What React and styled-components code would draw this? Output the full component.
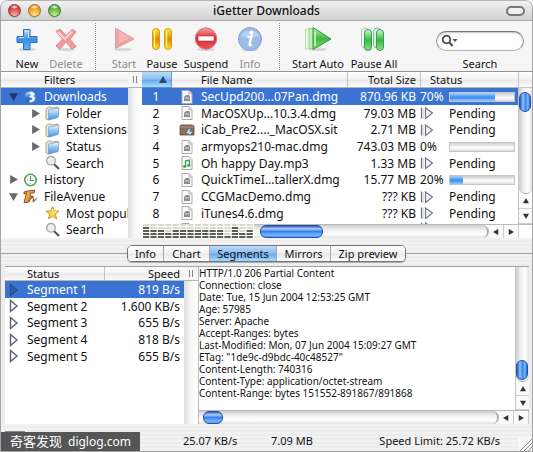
import React from "react";
import styled, { createGlobalStyle, css } from "styled-components";

const GlobalStyle = createGlobalStyle`
  * { box-sizing: border-box; }
  html, body { margin: 0; padding: 0; background: #fff; }
  body, button, input, table {
    font-family: "Noto Sans", "Open Sans", "Noto Sans CJK SC", sans-serif;
    font-size: 12px;
    color: #111;
  }
  button { border: 0; background: none; padding: 0; margin: 0; }
`;

const stripes = "repeating-linear-gradient(180deg, #f2f2f2 0 2px, #ededed 2px 4px)";
const headerFill = "linear-gradient(180deg, #fff 0%, #f3f3f3 45%, #e9e9e9 55%, #fcfcfc 100%)";
const blueFill = "linear-gradient(180deg, #b9dbf8 0%, #8fc0f2 45%, #6cabee 55%, #a5dcff 100%)";
const selected = "#3b73d3";

/* ---------- window ---------- */

const Window = styled.main`
  display: flex;
  flex-direction: column;
  min-height: 100vh;
  position: relative;
  overflow: hidden;
  background: #ededed;
  border: 1px solid #a4a4a4;
  border-top-color: #b4b4b4;
  border-radius: 8px 8px 0 0;
`;

const TitleBar = styled.header`
  display: grid;
  grid-template-columns: 68px 1fr 68px;
  align-items: center;
  height: 20px;
  padding: 0 7px;
  background: linear-gradient(180deg, #f1f1f1, #d2d2d2);
  border-bottom: 1px solid #a9a9a9;
`;

const Title = styled.h1`
  margin: 0;
  text-align: center;
  font-size: 12px;
  line-height: 18px;
  font-weight: 500;
`;

const Lights = styled.div`
  display: flex;
  gap: 7px;
`;

const Light = styled.button`
  width: 13px;
  height: 13px;
  border-radius: 50%;
  border: 1px solid ${(p) => p.$edge};
  background: radial-gradient(ellipse 4px 2px at 50% 18%, #fff, transparent),
    radial-gradient(circle at 50% 95%, ${(p) => p.$glow} 0, ${(p) => p.$base} 70%);
  box-shadow: 0 1px 1px #bbb;
`;

const Pill = styled.button`
  justify-self: end;
  width: 19px;
  height: 10px;
  border: 2px solid #777;
  border-radius: 5px;
  background: #f1f1f1;
`;

/* ---------- toolbar ---------- */

const Toolbar = styled.nav`
  display: flex;
  height: 51px;
  padding: 0 8px 0 7px;
  background: #f6f6f6;
  border-bottom: 1px solid #949494;
`;

const Tool = styled.button`
  width: ${(p) => p.$w}px;
  display: flex;
  flex-direction: column;
  align-items: center;
  padding-top: 4px;
  white-space: nowrap;
  font-size: 11px;
  line-height: 14px;
  color: #111;
  &:disabled { color: #8d8d8d; }
  svg { display: block; margin-bottom: 4px; flex: none; }
`;

const ToolDivider = styled.span`
  width: ${(p) => p.$w}px;
  display: flex;
  justify-content: center;
  &::after {
    content: "";
    margin: 2px 0 1px;
    border-left: 1px dotted #8c8c8c;
  }
`;

const SearchBox = styled.label`
  width: 88px;
  margin-left: auto;
  display: flex;
  flex-direction: column;
  align-items: center;
  padding-top: 10px;
  font-size: 11px;
  line-height: 14px;
`;

const SearchField = styled.span`
  width: 100%;
  height: 20px;
  margin-bottom: 6px;
  padding: 0 7px 0 4px;
  display: flex;
  align-items: center;
  background: #fff;
  border: 1px solid #8b8b8b;
  border-color: #777 #999 #b5b5b5;
  border-radius: 10px;
  box-shadow: inset 0 1px 2px #c0c0c0;
  input {
    flex: 1;
    min-width: 0;
    border: 0;
    outline: 0;
    padding: 0;
    background: transparent;
    font-size: 11px;
  }
`;

/* ---------- shared panes ---------- */

const Panes = styled.section`
  display: flex;
  flex: none;
  height: ${(p) => p.$h}px;
`;

const Splitter = styled.div`
  width: 14px;
  flex: none;
  background: linear-gradient(90deg, #dedede, #f7f7f7 50%, #fff);
  display: flex;
  flex-direction: column;
  align-items: stretch;
`;

const Grip = styled.span`
  height: ${(p) => p.$h}px;
  display: flex;
  justify-content: center;
  align-items: center;
  gap: 2px;
  background: #f6f6f6;
  border-bottom: 1px solid #b5b5b5;
  &::before, &::after {
    content: "";
    width: 1px;
    height: 7px;
    background: #858585;
  }
`;

const rowRhythm = css`
  height: 17px;
  &:nth-child(3n + 2) { height: 16px; }
`;

/* ---------- filters ---------- */

const FilterPane = styled.aside`
  width: 127px;
  flex: none;
  overflow: hidden;
  background: #fff;
`;

const FilterHeader = styled.h2`
  margin: 0;
  height: 16px;
  line-height: 15px;
  padding-left: 43px;
  font-size: 11px;
  font-weight: 400;
  background: ${headerFill};
  border-bottom: 1px solid #b5b5b5;
`;

const Tree = styled.ul`
  list-style: none;
  margin: 0;
  padding: 0;
`;

const TreeItem = styled.li`
  ${rowRhythm}
  display: flex;
  align-items: center;
  padding-left: ${(p) => (p.$nested ? 30 : 8)}px;
  white-space: nowrap;
  color: ${(p) => (p.$active ? "#fff" : "#111")};
  background: ${(p) => (p.$active ? selected : "transparent")};
`;

const Twisty = styled.button`
  width: 14px;
  height: 16px;
  flex: none;
  display: flex;
  align-items: center;
`;

const TreeIcon = styled.span`
  width: 21px;
  flex: none;
  height: 16px;
`;

/* ---------- tables ---------- */

const ListPane = styled.div`
  flex: 1;
  min-width: 0;
  display: flex;
  flex-direction: column;
  background: #fff;
`;

const ListBody = styled.div`
  flex: 1;
  min-height: 0;
  display: flex;
`;

const Clip = styled.div`
  flex: 1;
  min-width: 0;
  overflow: hidden;
`;

const Table = styled.table`
  width: 100%;
  table-layout: fixed;
  border-collapse: separate;
  border-spacing: 0;
  th {
    height: ${(p) => p.$head}px;
    padding: 0;
    font-size: 11px;
    line-height: 13px;
    font-weight: 400;
    text-align: left;
    white-space: nowrap;
    background: ${headerFill};
    border-bottom: 1px solid #b5b5b5;
  }
  td {
    padding: 0;
    line-height: 15px;
    white-space: nowrap;
    overflow: hidden;
  }
`;

const HeadCell = styled.th`
  && {
    padding-left: ${(p) => p.$pad || 0}px;
    text-align: ${(p) => (p.$right ? "right" : "left")};
    padding-right: ${(p) => (p.$right ? 4 : 0)}px;
    border-left: ${(p) => (p.$line ? "1px solid #c2c2c2" : "0")};
  }
  &&[aria-sort] {
    background: ${blueFill};
    border-right: 1px solid #6d9bd0;
    border-bottom-color: #5f8fc8;
  }
  svg { display: block; margin-left: 17px; }
`;

const Row = styled.tr`
  ${rowRhythm}
  color: ${(p) => (p.$active ? "#fff" : "#111")};
  background: ${(p) => (p.$active ? selected : "transparent")};
`;

const NumCell = styled.td`
  text-align: center;
  && { padding-right: 2px; }
`;

const SizeCell = styled.td`
  text-align: right;
  && { padding-right: 4px; }
`;

const IconCell = styled.td`
  svg { display: block; margin: 0 auto; }
`;

const StateCell = styled.td`
  && { padding-left: 3px; }
  svg { display: block; }
`;

const StatusLine = styled.div`
  display: grid;
  grid-template-columns: 29px 1fr;
  align-items: center;
  padding-right: 3px;
  height: 15px;
  svg { display: block; }
`;

const Track = styled.span`
  height: 10px;
  display: block;
  border: 1px solid #c6c6c6;
  background: linear-gradient(180deg, #cdcdcd, #fff 60%, #dcdcdc);
`;

const Fill = styled.span`
  display: block;
  height: 100%;
  background: linear-gradient(180deg, #a9d0fb, #3d8df0 55%, #87c8ff);
`;

/* ---------- scroll bars ---------- */

const VBar = styled.div`
  width: 14px;
  flex: none;
  display: flex;
  flex-direction: column;
  background: #fafafa;
  border-left: 1px solid #c4c4c4;
`;

const HBar = styled.div`
  height: 14px;
  flex: 1;
  min-width: 0;
  display: flex;
  background: #fafafa;
  border-top: 1px solid #b9b9b9;
`;

const Corner = styled.span`
  height: 16px;
  flex: none;
  background: ${headerFill};
  border-bottom: 1px solid #c2c2c2;
`;

const BarEnd = styled.span`
  width: 13px;
  flex: none;
  background: #fff;
`;

const VTrack = styled.div`
  flex: 1;
  display: flex;
  flex-direction: column;
  justify-content: ${(p) => (p.$end ? "flex-end" : "flex-start")};
  padding: 4px 0 ${(p) => (p.$end ? 1 : 0)}px;
  border-radius: 0 0 7px 7px;
  border-bottom: 1px solid #a5a5a5;
  background: linear-gradient(90deg, #cfcfcf, #f3f3f3 40%, #fff 70%, #e2e2e2);
`;

const HTrack = styled.div`
  flex: 1;
  display: flex;
  padding-left: ${(p) => p.$inset}px;
  border-radius: 0 7px 7px 0;
  border-right: 2px solid #aaa;
  background: linear-gradient(180deg, #cfcfcf, #f3f3f3 40%, #fff 70%, #e2e2e2);
`;

const VThumb = styled.span`
  height: 20px;
  width: 12px;
  border-radius: 6px;
  border: 1px solid #2a4fa0;
  background: linear-gradient(90deg, #1f55bd, #8fc3ff 30%, #3f86ea 55%, #74b9ff 80%, #2b62c4);
`;

const HThumb = styled.span`
  width: ${(p) => p.$w}px;
  height: 100%;
  border-radius: 6px;
  border: 1px solid #2a4fa0;
  background: linear-gradient(180deg, #2a5cc0, #a9d0ff 25%, #3b80e8 50%, #6cb6ff 80%, #5a9cf0);
`;

const Arrow = styled.button`
  width: ${(p) => p.$w}px;
  height: ${(p) => p.$h}px;
  flex: none;
  display: flex;
  align-items: center;
  justify-content: center;
  border: 0 solid #cdcdcd;
  border-width: ${(p) => (p.$vertical ? "0 0 1px" : "0 1px 0 0")};
`;

const Footer = styled.div`
  display: flex;
  height: 14px;
`;

/* ---------- tabs ---------- */

const TabRow = styled.div`
  display: flex;
  align-items: center;
  height: 28px;
  background: ${stripes};
  padding-top: 3px;
  &::before { content: ""; width: 126px; border-top: 1px solid #a0a0a0; }
  &::after { content: ""; flex: 1; border-top: 1px solid #a0a0a0; }
`;

const Tabs = styled.div`
  display: flex;
  height: 17px;
  border: 1px solid #747474;
  border-radius: 5px;
  overflow: hidden;
  box-shadow: 0 1px 1px #aaa;
`;

const Tab = styled.button`
  width: ${(p) => p.$w}px;
  font-size: 11px;
  line-height: 14px;
  background: ${headerFill};
  & + & { border-left: 1px solid #a8a8a8; }
  &[aria-selected="true"] { background: ${blueFill}; }
`;

/* ---------- details ---------- */

const Details = styled(Panes)`
  margin: 0 3px 0 4px;
  border-top: 1px solid #a3a3a3;
  background: #fff;
`;

const SegmentPane = styled.div`
  width: 179px;
  flex: none;
  background: #fff;
`;

const LogPane = styled.div`
  flex: 1;
  min-width: 0;
  display: flex;
  flex-direction: column;
  border-left: 1px solid #b9b9b9;
`;

const Log = styled.pre`
  flex: 1;
  min-width: 0;
  margin: 0;
  overflow: hidden;
  font-family: "Noto Sans", "Open Sans", sans-serif;
  font-size: 10px;
  line-height: 12px;
`;

/* ---------- status bar ---------- */

const StatusBar = styled.footer`
  flex: 1;
  display: flex;
  align-items: center;
  padding: 5px 3px 0 4px;
  font-size: 11px;
  background: ${stripes};
`;

const StatusButton = styled.button`
  width: 20px;
  height: 18px;
  margin-right: 158px;
  border: 1px solid #8a8a8a;
  background: #ddd;
`;

const Rate = styled.span`
  width: 88px;
`;

const Limit = styled.span`
  margin-left: auto;
  margin-right: 29px;
`;

const Resize = styled.span`
  position: absolute;
  right: 0;
  bottom: 0;
  line-height: 0;
`;

const Watermark = styled.div`
  position: absolute;
  left: 0;
  bottom: 0;
  width: 139px;
  height: 19px;
  padding-left: 9px;
  display: flex;
  gap: 6px;
  color: #fff;
  background: #555;
  font-size: 13px;
  line-height: 19px;
  white-space: nowrap;
`;

const Domain = styled.span`
  font-size: 12px;
`;

/* ---------- drawings ---------- */

const Svg = ({ w = 16, h = 16, vb, children }) => (
  <svg width={w} height={h} viewBox={vb || `0 0 ${w} ${h}`} fill="none" aria-hidden="true">
    {children}
  </svg>
);

const Grad = ({ id, from, mid, to }) => (
  <linearGradient id={id} x1="0" y1="0" x2="0" y2="1">
    <stop offset="0" stopColor={from} />
    <stop offset="0.5" stopColor={mid} />
    <stop offset="1" stopColor={to} />
  </linearGradient>
);

const Shadow = ({ cx = 14 }) => <ellipse cx={cx} cy="24.5" rx="9" ry="1.6" fill="#000" opacity=".13" />;

const toolIcons = {
  new: (
    <Svg w={28} h={28}>
      <defs><Grad id="plus" from="#b9dcf8" mid="#3c8fe2" to="#5fb4f5" /></defs>
      <Shadow />
      <path d="M10.5 4.500h6.500v7h7v6h-7v7h-6.500v-7h-6.500v-6h6.500z" fill="url(#plus)" stroke="#2d6fc0" />
      <path d="M12 6h3.500v7M6 12.500h5" stroke="#d9efff" strokeWidth="1" opacity=".8" />
    </Svg>
  ),
  delete: (
    <Svg w={28} h={28}>
      <Shadow />
      <path d="M4 6.500l4-2.500 6 6.500 6.500-6.500 3.500 3-6 7 6 7.500-4 2.500-6-7-6 7-4-3 6.500-7z" fill="#f19a9d" stroke="#e0898d" />
      <path d="M6 7l8 8M20 6.500l-6 6.500" stroke="#fbd5d5" strokeWidth="2" />
    </Svg>
  ),
  start: (
    <Svg w={28} h={28}>
      <Shadow cx={13} />
      <path d="M5.500 3l18.500 11-18.500 9.500z" fill="#f3b4b8" stroke="#d99a9e" />
      <path d="M7.500 6.500v14l13-7" stroke="#f0878d" strokeWidth="1.500" opacity=".6" />
    </Svg>
  ),
  pause: (
    <Svg w={28} h={28}>
      <defs><Grad id="amber" from="#ffef3f" mid="#ee7b12" to="#ffe52b" /></defs>
      <rect x="4.500" y="3.500" width="7" height="21" rx="3.500" fill="url(#amber)" stroke="#c9a20a" />
      <rect x="16.500" y="3.500" width="7" height="21" rx="3.500" fill="url(#amber)" stroke="#c9a20a" />
      <path d="M6.500 6v16M18.500 6v16" stroke="#fff36a" strokeWidth="1.500" />
    </Svg>
  ),
  suspend: (
    <Svg w={28} h={28}>
      <defs><Grad id="stop" from="#f5a1a4" mid="#dc2932" to="#f0525a" /></defs>
      <Shadow />
      <circle cx="14" cy="13.500" r="10.700" fill="url(#stop)" stroke="#d5797e" />
      <rect x="6" y="11" width="16" height="5" fill="#fff" stroke="#bd2830" strokeWidth=".6" />
    </Svg>
  ),
  info: (
    <Svg w={28} h={28}>
      <Shadow />
      <circle cx="14" cy="14" r="11.500" fill="#9dbbe4" stroke="#7fa3d6" />
      <path d="M5 11a9.500 8 0 0 1 18 0q-9 4-18 0z" fill="#b9d1f0" />
      <circle cx="15.500" cy="7.500" r="2" fill="#fff" />
      <path d="M11.500 12.500l4-1.500-2 8.500q0 1.500 2.500 0" stroke="#fff" strokeWidth="2.300" />
    </Svg>
  ),
  startAuto: (
    <Svg w={28} h={28}>
      <defs><Grad id="go" from="#b5edab" mid="#3fb844" to="#7cdb70" /></defs>
      <Shadow cx={14} />
      <path d="M1.500 4v20M1.500 4h6v20h-6z" fill="#e8f8e4" stroke="#b7e3b0" />
      <path d="M5 3.500h5v20H5z" fill="#c3ebbc" stroke="#9dd695" />
      <path d="M9 2.500L27 14 9 24.500z" fill="url(#go)" stroke="#2f9a38" />
      <path d="M11 6.500v14.500" stroke="#dff8da" strokeWidth="1.500" />
    </Svg>
  ),
  pauseAll: (
    <Svg w={28} h={28}>
      <defs><Grad id="green" from="#d5f5d0" mid="#35bb3d" to="#8fe386" /></defs>
      <rect x="1.500" y="3" width="7" height="20" rx="3.500" fill="#effaf0" stroke="#96cfa5" />
      <rect x="13.500" y="3" width="7" height="20" rx="3.500" fill="#d8f3da" stroke="#7abf92" />
      <rect x="4.500" y="4.500" width="7" height="21" rx="3.500" fill="url(#green)" stroke="#3a9a64" />
      <rect x="16.500" y="4.500" width="7" height="21" rx="3.500" fill="url(#green)" stroke="#3a9a64" />
    </Svg>
  ),
};

const Triangle = ({ dir = "right", size = 8, color = "#666" }) => {
  const d = { right: "M1 0L8 4L1 8z", down: "M0 1L8 1L4 8z", up: "M0 7L8 7L4 0z", left: "M7 0L0 4L7 8z" }[dir];
  return <Svg w={size} h={size} vb="0 0 8 8"><path d={d} fill={color} /></Svg>;
};

const SearchGlyph = () => (
  <Svg w={17} h={14}>
    <circle cx="5.500" cy="5.500" r="3.800" stroke="#4b4b4b" strokeWidth="1.800" />
    <path d="M8.500 8.500L11.500 12" stroke="#4b4b4b" strokeWidth="2" />
    <path d="M11.500 5h5L14 8z" fill="#4b4b4b" />
  </Svg>
);

const treeIcons = {
  globe: (
    <Svg>
      <defs><Grad id="globe" from="#b9dcfa" mid="#3c83d8" to="#2458a8" /></defs>
      <circle cx="7" cy="8" r="5.500" fill="url(#globe)" />
      <path d="M7 3q4-1 5 3l-2 1q4 1 1 5-2 2-5 1l1-2q3 0 2-2l-3-1 2-2q-1-2-3-1z" fill="#f6faff" stroke="#8eb3e0" strokeWidth=".5" />
    </Svg>
  ),
  folder: (
    <Svg>
      <defs><Grad id="fold" from="#f2f9ff" mid="#8ec0f2" to="#4b91e2" /></defs>
      <path d="M1 4l2-2 3 0 1 1 6-1v10l-9 3-3-1z" fill="#e9e4d4" stroke="#9b9686" strokeWidth=".8" />
      <path d="M3.500 5L14 3l-1 9.500-9.500 2.500z" fill="url(#fold)" stroke="#6f9fcf" strokeWidth=".7" />
    </Svg>
  ),
  search: (
    <Svg>
      <path d="M9 9l5 5" stroke="#555" strokeWidth="2.200" />
      <circle cx="6" cy="5.800" r="4.300" fill="#e7eff6" stroke="#a5a5a5" strokeWidth="1.300" />
      <path d="M3.500 5a3 3 0 0 1 3-2" stroke="#fff" />
    </Svg>
  ),
  history: (
    <Svg>
      <circle cx="7.500" cy="8" r="5.700" fill="#fff" stroke="#4fa558" strokeWidth="1.600" />
      <path d="M7.500 4v4.500h3.500" stroke="#6a8a6d" strokeWidth="1.200" />
      <path d="M4 8h1M7.500 12v-1" stroke="#93b896" />
    </Svg>
  ),
  avenue: (
    <Svg>
      <path d="M1 3q5-2 11-1.500l-1 2.500H7.500L7 7h3l-1 2H6.500L5 13.500H1L3.500 4 1 5z" fill="#f0a23c" stroke="#79451a" strokeWidth=".9" />
      <path d="M6 13q3-7 4-5t0 5l3-3" stroke="#8b5f38" strokeWidth="1.200" />
      <path d="M11 13q2-2 3-5" stroke="#aaa" />
    </Svg>
  ),
  star: (
    <Svg>
      <path d="M7.500 1.500l1.800 4.300 4.700.4-3.600 3 1.200 4.600-4.100-2.500-4 2.500 1.200-4.600L1 6.200l4.700-.4z" fill="#ffd64a" stroke="#cf9433" />
      <path d="M7.500 4L8.500 7h3" stroke="#fff2ae" />
    </Svg>
  ),
};

const fileIcons = {
  dmg: (
    <Svg w={12} h={14}>
      <path d="M1 .5h7L11 3.500v10H1z" fill="#fafafa" stroke="#acacac" />
      <path d="M8 .5V4h3" stroke="#b5b5b5" fill="#ddd" />
      <path d="M3 7l2-2h3l1 2v4H3z" fill="#8b8b8b" />
      <path d="M4 8h4" stroke="#e3e3e3" />
    </Svg>
  ),
  sit: (
    <Svg w={16} h={14}>
      <path d="M1 3l1-1h11l2 1v9H1z" fill="#8a6c59" stroke="#5f4738" strokeWidth=".8" />
      <path d="M1 4h14" stroke="#b5967f" />
      <path d="M9 6l3-1-1 3 3 1-3 3-4-2z" fill="#c3d6ea" stroke="#4e6b94" strokeWidth=".8" />
    </Svg>
  ),
  mp3: (
    <Svg w={12} h={14}>
      <path d="M1 .5h7L11 3.500v10H1z" fill="#f6fbf6" stroke="#a3a3a3" />
      <path d="M4.500 10V5l4-1v5" stroke="#3c9b45" strokeWidth="1.300" />
      <ellipse cx="3.700" cy="10.500" rx="1.700" ry="1.300" fill="#3c9b45" />
      <ellipse cx="7.700" cy="9.500" rx="1.700" ry="1.300" fill="#3c9b45" />
    </Svg>
  ),
};

const PendingIcon = () => (
  <Svg w={14} h={14}>
    <path d="M1.500 1.500v11" stroke="#73747c" strokeWidth="1.200" />
    <path d="M3 2v11" stroke="#c5c8d2" />
    <path d="M5.500 2L12.500 7l-7 5.500z" fill="#f4f6fc" stroke="#73778a" strokeWidth="1.200" />
  </Svg>
);

const SegmentIcon = ({ active }) => (
  <Svg w={12} h={14}>
    <path d="M2.500 1.500L9 7 2.500 12.500z" fill={active ? "#335fae" : "#fff"} stroke={active ? "#29508f" : "#5c5f70"} strokeWidth="1.400" />
  </Svg>
);

const levels = [4, 3, 3, 2, 3, 3, 3, 3, 3, 3, 3, 1, 4, 2, 3];

const SpeedMeter = () => (
  <svg width="112" height="14" viewBox="0 0 112 14" role="img" aria-label="Speed meter">
    {levels.map((lit, i) =>
      [0, 1, 2, 3, 4].map((s) => (
        <rect key={`${i}-${s}`} x={1 + i * 7.4} y={12 - s * 3} width="6.200" height="2" fill={s < lit ? "#5c5f56" : "#d9dacb"} />
      ))
    )}
  </svg>
);

/* ---------- data ---------- */

const filters = [
  { name: "Downloads", icon: "globe", twisty: "down", active: true },
  { name: "Folder", icon: "folder", twisty: "right", nested: true },
  { name: "Extensions", icon: "folder", twisty: "right", nested: true },
  { name: "Status", icon: "folder", twisty: "right", nested: true },
  { name: "Search", icon: "search", nested: true },
  { name: "History", icon: "history", twisty: "right" },
  { name: "FileAvenue", icon: "avenue", twisty: "down" },
  { name: "Most popular", icon: "star", nested: true },
  { name: "Search", icon: "search", nested: true },
];

const downloads = [
  { name: "SecUpd200...07Pan.dmg", type: "dmg", size: "870.96 KB", percent: 70 },
  { name: "MacOSXUp...10.3.4.dmg", type: "dmg", size: "79.03 MB" },
  { name: "iCab_Pre2...._MacOSX.sit", type: "sit", size: "2.71 MB" },
  { name: "armyops210-mac.dmg", type: "dmg", size: "743.03 MB", percent: 0 },
  { name: "Oh happy Day.mp3", type: "mp3", size: "1.33 MB" },
  { name: "QuickTimeI...tallerX.dmg", type: "dmg", size: "15.77 MB", percent: 20 },
  { name: "CCGMacDemo.dmg", type: "dmg", size: "??? KB" },
  { name: "iTunes4.6.dmg", type: "dmg", size: "??? KB" },
];

const segments = ["819 B/s", "1.600 KB/s", "655 B/s", "818 B/s", "655 B/s"];

const log = `HTTP/1.0 206 Partial Content
Connection: close
Date: Tue, 15 Jun 2004 12:53:25 GMT
Age: 57985
Server: Apache
Accept-Ranges: bytes
Last-Modified: Mon, 07 Jun 2004 15:09:27 GMT
ETag: "1de9c-d9bdc-40c48527"
Content-Length: 740316
Content-Type: application/octet-stream
Content-Range: bytes 151552-891867/891868`;

const tabs = [["Info", 35], ["Chart", 46], ["Segments", 67], ["Mirrors", 54], ["Zip preview", 75]];

/* ---------- composition ---------- */

const VerticalBar = ({ corner, end, arrow }) => (
  <VBar>
    {corner && <Corner />}
    <VTrack $end={end}><VThumb /></VTrack>
    <Arrow $w={13} $h={arrow} $vertical aria-label="Scroll up"><Triangle dir="up" size={6} color="#333" /></Arrow>
    <Arrow $w={13} $h={arrow} $vertical aria-label="Scroll down"><Triangle dir="down" size={6} color="#333" /></Arrow>
  </VBar>
);

const HorizontalBar = ({ inset, thumb, end }) => (
  <HBar>
    <HTrack $inset={inset}><HThumb $w={thumb} /></HTrack>
    <Arrow $w={15} $h={13} aria-label="Scroll left"><Triangle dir="left" size={6} color="#333" /></Arrow>
    <Arrow $w={15} $h={13} aria-label="Scroll right"><Triangle dir="right" size={6} color="#333" /></Arrow>
    {end && <BarEnd />}
  </HBar>
);

const Status = ({ percent }) =>
  percent === undefined ? (
    <StatusLine><PendingIcon /><span>Pending</span></StatusLine>
  ) : (
    <StatusLine>
      <span>{percent}%</span>
      <Track role="progressbar" aria-label="Progress" aria-valuenow={percent}>
        <Fill style={{ width: `${percent}%` }} />
      </Track>
    </StatusLine>
  );

export default function App() {
  return (
    <>
      <GlobalStyle />
      <Window>
        <TitleBar>
          <Lights>
            <Light $edge="#92383a" $base="#cf3c40" $glow="#ffb1a8" aria-label="Close" />
            <Light $edge="#a66c22" $base="#ee9420" $glow="#ffee85" aria-label="Minimize" />
            <Light $edge="#447a35" $base="#55a83c" $glow="#c8f795" aria-label="Zoom" />
          </Lights>
          <Title>iGetter Downloads</Title>
          <Pill aria-label="Toggle toolbar" />
        </TitleBar>

        <Toolbar>
          <Tool $w={38}>{toolIcons.new}New</Tool>
          <Tool $w={40} disabled>{toolIcons.delete}Delete</Tool>
          <ToolDivider $w={18} />
          <Tool $w={40} disabled>{toolIcons.start}Start</Tool>
          <Tool $w={36}>{toolIcons.pause}Pause</Tool>
          <Tool $w={52}>{toolIcons.suspend}Suspend</Tool>
          <Tool $w={36} disabled>{toolIcons.info}Info</Tool>
          <ToolDivider $w={22} />
          <Tool $w={56}>{toolIcons.startAuto}Start Auto</Tool>
          <Tool $w={56}>{toolIcons.pauseAll}Pause All</Tool>
          <SearchBox>
            <SearchField><SearchGlyph /><input type="text" /></SearchField>
            Search
          </SearchBox>
        </Toolbar>

        <Panes $h={166}>
          <FilterPane>
            <FilterHeader>Filters</FilterHeader>
            <Tree>
              {filters.map((f, i) => (
                <TreeItem key={i} $nested={f.nested} $active={f.active}>
                  <Twisty aria-label={`Toggle ${f.name}`} disabled={!f.twisty}>
                    {f.twisty && <Triangle dir={f.twisty} size={9} color={f.active ? "#1c3a70" : "#6a6a6a"} />}
                  </Twisty>
                  <TreeIcon>{treeIcons[f.icon]}</TreeIcon>
                  {f.name}
                </TreeItem>
              ))}
            </Tree>
          </FilterPane>
          <Splitter><Grip $h={16} /></Splitter>
          <ListPane>
            <ListBody>
              <Clip>
                <Table $head={16}>
                  <colgroup>
                    <col width="30" /><col width="29" /><col /><col width="73" /><col width="98" />
                  </colgroup>
                  <thead>
                    <tr>
                      <HeadCell aria-sort="ascending" aria-label="Number"><Triangle dir="up" color="#274a78" /></HeadCell>
                      <HeadCell aria-label="Kind" />
                      <HeadCell>File Name</HeadCell>
                      <HeadCell $right $line>Total Size</HeadCell>
                      <HeadCell $pad={9} $line>Status</HeadCell>
                    </tr>
                  </thead>
                  <tbody>
                    {downloads.map((d, i) => (
                      <Row key={d.name} $active={i === 0}>
                        <NumCell>{i + 1}</NumCell>
                        <IconCell>{fileIcons[d.type]}</IconCell>
                        <td>{d.name}</td>
                        <SizeCell>{d.size}</SizeCell>
                        <td><Status percent={d.percent} /></td>
                      </Row>
                    ))}
                    <Row>
                      <td /><IconCell>{fileIcons.dmg}</IconCell><td /><td /><td><PendingIcon /></td>
                    </Row>
                  </tbody>
                </Table>
              </Clip>
              <VerticalBar corner arrow={15} />
            </ListBody>
            <Footer>
              <SpeedMeter />
              <HorizontalBar inset={6} thumb={63} end />
            </Footer>
          </ListPane>
        </Panes>

        <TabRow>
          <Tabs role="tablist">
            {tabs.map(([name, w]) => (
              <Tab key={name} role="tab" $w={w} aria-selected={name === "Segments"}>{name}</Tab>
            ))}
          </Tabs>
        </TabRow>

        <Details $h={158}>
          <SegmentPane>
            <Table $head={14}>
              <colgroup><col width="22" /><col /><col width="80" /></colgroup>
              <thead>
                <tr>
                  <HeadCell aria-label="State" />
                  <HeadCell>Status</HeadCell>
                  <HeadCell $right $line>Speed</HeadCell>
                </tr>
              </thead>
              <tbody>
                {segments.map((speed, i) => (
                  <Row key={i} $active={i === 0}>
                    <StateCell><SegmentIcon active={i === 0} /></StateCell>
                    <td>Segment {i + 1}</td>
                    <SizeCell>{speed}</SizeCell>
                  </Row>
                ))}
              </tbody>
            </Table>
          </SegmentPane>
          <Splitter><Grip $h={14} /></Splitter>
          <LogPane>
            <ListBody>
              <Log>{log}</Log>
              <VerticalBar end arrow={14} />
            </ListBody>
            <Footer><HorizontalBar inset={4} thumb={20} /></Footer>
          </LogPane>
        </Details>

        <StatusBar>
          <StatusButton aria-label="Options" />
          <Rate>25.07 KB/s</Rate>
          <span>7.09 MB</span>
          <Limit>Speed Limit: 25.72 KB/s</Limit>
          <Resize>
            <Svg w={14} h={14}>
              <path d="M0 0h14v14H0z" fill="#f7f7f7" />
              <path d="M2 14L14 2M6 14l8-8M10 14l4-4" stroke="#8f8f8f" />
            </Svg>
          </Resize>
        </StatusBar>
        <Watermark>奇客发现 <Domain>diglog.com</Domain></Watermark>
      </Window>
    </>
  );
}
